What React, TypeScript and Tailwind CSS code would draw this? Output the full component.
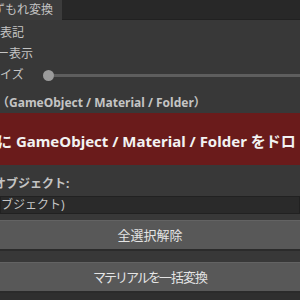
import React from "react";

export default function App() {
  return (
    <div className="w-[300px] h-[300px] overflow-hidden bg-[#383838] text-[12px] leading-[14px] text-[#c4c4c4] font-['Noto_Sans','Noto_Sans_CJK_JP',sans-serif]">
      {/* tab bar */}
      <div className="h-[20px] bg-[#282828] border-b border-[#212121] flex">
        <div className="w-[62px] h-[20px] bg-[#3c3c3c] flex items-center overflow-hidden whitespace-nowrap">
          <span className="ml-[-7px]">ずもれ変換</span>
        </div>
      </div>
      {/* rows */}
      <div className="mt-[2px] h-[21px] flex items-center overflow-hidden whitespace-nowrap">
        <span>表記</span>
      </div>
      <div className="h-[21px] flex items-center overflow-hidden whitespace-nowrap">
        <span className="ml-[-3px]">ー表示</span>
      </div>
      <div className="h-[22px] flex items-center overflow-hidden whitespace-nowrap">
        <span className="w-[43px] shrink-0">イズ</span>
        <div className="relative flex-1 h-[11px] flex items-center">
          <div className="absolute left-[5px] right-0 h-[3px] bg-[#5e5e5e] rounded-l-sm" />
          <div className="relative w-[11px] h-[11px] rounded-full bg-[#9b9b9b]" />
        </div>
      </div>
      {/* title */}
      <div className="h-[27px] flex items-end pb-[3px] overflow-hidden whitespace-nowrap font-bold">
        <span className="ml-[-3px]">（GameObject / Material / Folder）</span>
      </div>
      {/* drop box */}
      <div className="h-[52px] bg-[#6a1b1b] flex items-center pt-[4px] overflow-hidden whitespace-nowrap font-bold text-[15px] text-[#f2f2f2]">
        <span className="ml-[-3px]">に GameObject / Material / Folder をドロ</span>
      </div>
      {/* label */}
      <div className="h-[30px] flex items-center pt-[7px] overflow-hidden whitespace-nowrap font-bold">
        <span className="ml-[-6px]">オブジェクト:</span>
      </div>
      {/* field */}
      <div className="mt-[1px] h-[18px] bg-[#2a2a2a] border border-[#212121] flex items-center overflow-hidden whitespace-nowrap">
        <span className="ml-[0px]">ブジェクト)</span>
      </div>
      {/* buttons */}
      <div className="mt-[6px] h-[31px] bg-[#585858] border-t border-[#636363] border-b-2 border-b-[#2b2b2b] flex items-center justify-center text-[13px] text-[#e4e4e4]">
        全選択解除
      </div>
      <div className="mt-[11px] h-[31px] bg-[#585858] border-t border-[#636363] border-b-2 border-b-[#2b2b2b] flex items-center justify-center text-[13px] text-[#e4e4e4]">
        <span className="tracking-[-2px]">マテリアルを</span>
        <span className="tracking-[-1px]">一括変換</span>
      </div>
      <div className="h-[8px] bg-[#2f2f2f]" />
    </div>
  );
}
